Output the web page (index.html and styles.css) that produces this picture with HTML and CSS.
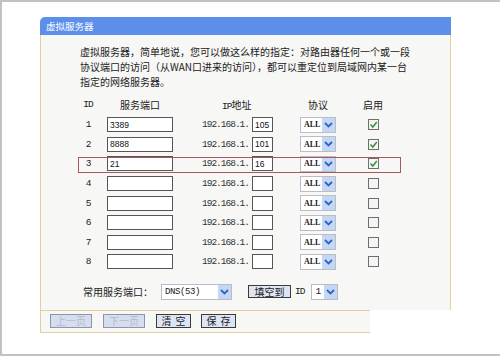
FILE: index.html
```html
<html>

<head>
	<meta charset="utf-8">
	<link rel="stylesheet" href="styles.css">
</head>

<body>
	<div id="div_frame">
		<div id="div_panel">
			<div class="title">虚拟服务器</div>
			<div class="panel_body">
				<p class="intro">虚拟服务器，简单地说，您可以做这么样的指定：对路由器任何一个或一段<br>协议端口的访问（从WAN口进来的访问），都可以重定位到局域网内某一台<br>指定的网络服务器。</p>

				<div class="grid head">
					<div class="c_id mono">ID</div>
					<div class="c_port">服务端口</div>
					<div class="c_ip"><span class="h_ip"><span class="mono">IP</span>地址</span></div>
					<div class="c_proto"><span class="h_proto">协议</span></div>
					<div class="c_on"><span class="h_on">启用</span></div>
				</div>

				<div id="div_rows">
					<div class="grid row">
						<div class="c_id mono">1</div>
						<div class="c_port"><input class="txt_port" type="text" value="3389"></div>
						<div class="c_ip"><span class="ip_pre mono">192.168.1.</span><input class="txt_ip" type="text" value="105"></div>
						<div class="c_proto"><span class="sel sel_proto">ALL<span class="arrow"><svg width="13" height="14" viewBox="0 0 13 14"><polyline points="3,5 6.5,8.5 10,5" fill="none" stroke="#2e64c8" stroke-width="1.8"/></svg></span></span></div>
						<div class="c_on"><span class="chk"><svg width="9" height="9" viewBox="0 0 9 9"><polyline points="1.5,4.5 3.8,7 7.8,2" fill="none" stroke="#3b8f3b" stroke-width="1.5"/></svg></span></div>
					</div>
					<div class="grid row">
						<div class="c_id mono">2</div>
						<div class="c_port"><input class="txt_port" type="text" value="8888"></div>
						<div class="c_ip"><span class="ip_pre mono">192.168.1.</span><input class="txt_ip" type="text" value="101"></div>
						<div class="c_proto"><span class="sel sel_proto">ALL<span class="arrow"><svg width="13" height="14" viewBox="0 0 13 14"><polyline points="3,5 6.5,8.5 10,5" fill="none" stroke="#2e64c8" stroke-width="1.8"/></svg></span></span></div>
						<div class="c_on"><span class="chk"><svg width="9" height="9" viewBox="0 0 9 9"><polyline points="1.5,4.5 3.8,7 7.8,2" fill="none" stroke="#3b8f3b" stroke-width="1.5"/></svg></span></div>
					</div>
					<div class="grid row">
						<div class="c_id mono">3</div>
						<div class="c_port"><input class="txt_port" type="text" value="21"></div>
						<div class="c_ip"><span class="ip_pre mono">192.168.1.</span><input class="txt_ip" type="text" value="16"></div>
						<div class="c_proto"><span class="sel sel_proto">ALL<span class="arrow"><svg width="13" height="14" viewBox="0 0 13 14"><polyline points="3,5 6.5,8.5 10,5" fill="none" stroke="#2e64c8" stroke-width="1.8"/></svg></span></span></div>
						<div class="c_on"><span class="chk"><svg width="9" height="9" viewBox="0 0 9 9"><polyline points="1.5,4.5 3.8,7 7.8,2" fill="none" stroke="#3b8f3b" stroke-width="1.5"/></svg></span></div>
					</div>
					<div class="grid row">
						<div class="c_id mono">4</div>
						<div class="c_port"><input class="txt_port" type="text"></div>
						<div class="c_ip"><span class="ip_pre mono">192.168.1.</span><input class="txt_ip" type="text"></div>
						<div class="c_proto"><span class="sel sel_proto">ALL<span class="arrow"><svg width="13" height="14" viewBox="0 0 13 14"><polyline points="3,5 6.5,8.5 10,5" fill="none" stroke="#2e64c8" stroke-width="1.8"/></svg></span></span></div>
						<div class="c_on"><span class="chk"></span></div>
					</div>
					<div class="grid row">
						<div class="c_id mono">5</div>
						<div class="c_port"><input class="txt_port" type="text"></div>
						<div class="c_ip"><span class="ip_pre mono">192.168.1.</span><input class="txt_ip" type="text"></div>
						<div class="c_proto"><span class="sel sel_proto">ALL<span class="arrow"><svg width="13" height="14" viewBox="0 0 13 14"><polyline points="3,5 6.5,8.5 10,5" fill="none" stroke="#2e64c8" stroke-width="1.8"/></svg></span></span></div>
						<div class="c_on"><span class="chk"></span></div>
					</div>
					<div class="grid row">
						<div class="c_id mono">6</div>
						<div class="c_port"><input class="txt_port" type="text"></div>
						<div class="c_ip"><span class="ip_pre mono">192.168.1.</span><input class="txt_ip" type="text"></div>
						<div class="c_proto"><span class="sel sel_proto">ALL<span class="arrow"><svg width="13" height="14" viewBox="0 0 13 14"><polyline points="3,5 6.5,8.5 10,5" fill="none" stroke="#2e64c8" stroke-width="1.8"/></svg></span></span></div>
						<div class="c_on"><span class="chk"></span></div>
					</div>
					<div class="grid row">
						<div class="c_id mono">7</div>
						<div class="c_port"><input class="txt_port" type="text"></div>
						<div class="c_ip"><span class="ip_pre mono">192.168.1.</span><input class="txt_ip" type="text"></div>
						<div class="c_proto"><span class="sel sel_proto">ALL<span class="arrow"><svg width="13" height="14" viewBox="0 0 13 14"><polyline points="3,5 6.5,8.5 10,5" fill="none" stroke="#2e64c8" stroke-width="1.8"/></svg></span></span></div>
						<div class="c_on"><span class="chk"></span></div>
					</div>
					<div class="grid row">
						<div class="c_id mono">8</div>
						<div class="c_port"><input class="txt_port" type="text"></div>
						<div class="c_ip"><span class="ip_pre mono">192.168.1.</span><input class="txt_ip" type="text"></div>
						<div class="c_proto"><span class="sel sel_proto">ALL<span class="arrow"><svg width="13" height="14" viewBox="0 0 13 14"><polyline points="3,5 6.5,8.5 10,5" fill="none" stroke="#2e64c8" stroke-width="1.8"/></svg></span></span></div>
						<div class="c_on"><span class="chk"></span></div>
					</div>
					<!-- red box drawn over row 3 -->
					<div class="mark"></div>
				</div>

				<div class="common">
					<span>常用服务端口：</span>
					<span class="sel sel_dns">DNS(53)<span class="arrow"><svg width="13" height="14" viewBox="0 0 13 14"><polyline points="3,5 6.5,8.5 10,5" fill="none" stroke="#2e64c8" stroke-width="1.8"/></svg></span></span>
					<span class="btn btn_fill">填空到</span>
					<span class="lbl_id mono">ID</span>
					<span class="sel sel_id">1<span class="arrow"><svg width="13" height="14" viewBox="0 0 13 14"><polyline points="3,5 6.5,8.5 10,5" fill="none" stroke="#2e64c8" stroke-width="1.8"/></svg></span></span>
				</div>
			</div>

			<div class="footer">
				<span class="btn btn_page off">上一页</span>
				<span class="btn btn_page off">下一页</span>
				<span class="btn btn_act">清空</span>
				<span class="btn btn_act">保存</span>
			</div>
		</div>
	</div>
</body>

</html>
```

FILE: styles.css
```css
html,
body {
	margin: 0;
	padding: 0;
	background: #fff;
}

#div_frame {
	width: 500px;
	height: 356px;
	box-sizing: border-box;
	border-top: 2px solid #c2c2c2;
	border-left: 2px solid #c2c2c2;
	border-bottom: 2px solid #c2c2c2;
	padding-top: 15px;
	padding-left: 38px;
	font-family: "Noto Sans CJK SC", sans-serif;
	font-size: 10px;
	color: #222;
}

#div_panel {
	width: 411px;
}

.title {
	height: 18px;
	line-height: 18px;
	background: #5c8fea;
	border-top-left-radius: 5px;
	color: #fff;
	font-size: 9.5px;
	padding-left: 6px;
}

.panel_body {
	background: #f7f7f5;
	border-left: 1px solid #e3cf9c;
	border-right: 1px solid #e3cf9c;
	padding: 9px 0 8px 39px;
}

.intro {
	margin: 0 0 4px 0;
	line-height: 15px;
	white-space: nowrap;
}

.mono {
	font-family: "Liberation Mono", monospace;
	font-size: 9.5px;
	letter-spacing: -1px;
}

/* table columns */
.grid {
	display: grid;
	grid-template-columns: 27px 66px 117px 56px 54px;
}

.grid > div {
	display: flex;
	align-items: center;
}

.head {
	height: 22px;
}

.row {
	height: 19.6px;
}

.c_id {
	justify-content: center;
	padding-right: 11px;
}

.c_port {
	justify-content: center;
}

.c_ip {
	padding-left: 29px;
}

.h_ip {
	margin-left: 20px;
}

.h_proto {
	margin-left: 10px;
	width: 36px;
	text-align: center;
}

.h_on {
	margin-left: 17px;
}

#div_rows {
	position: relative;
}

.mark {
	position: absolute;
	left: -2px;
	top: 42px;
	width: 323px;
	height: 16px;
	box-sizing: border-box;
	border: 1px solid #a8585c;
}

input {
	box-sizing: border-box;
	height: 15px;
	border: 1px solid #555;
	background: #fff;
	padding: 0 0 0 2px;
	margin: 0;
	font-family: "Liberation Sans", sans-serif;
	font-size: 8.5px;
	color: #111;
}

.txt_port {
	width: 66px;
}

.txt_ip {
	width: 21px;
	margin-left: 3px;
}

.ip_pre {
	color: #333;
}

/* fake drop down lists */
.sel {
	position: relative;
	display: inline-flex;
	align-items: center;
	box-sizing: border-box;
	height: 16px;
	border: 1px solid #b9bec6;
	background: #fff;
	padding-left: 3px;
	font-family: "Liberation Serif", serif;
	font-size: 8px;
	font-weight: bold;
	color: #222;
}

.sel .arrow {
	position: absolute;
	right: 0;
	top: 0;
	width: 13px;
	height: 14px;
	background: #c6d7f4;
}

.arrow svg {
	display: block;
}

.sel_proto {
	margin-left: 10px;
	width: 36px;
}

.sel_dns {
	margin-left: 8px;
	width: 71px;
	font-family: "Liberation Mono", monospace;
	font-size: 9px;
	letter-spacing: -0.4px;
	font-weight: normal;
}

.sel_id {
	margin-left: 7px;
	width: 27px;
	font-family: "Liberation Mono", monospace;
	font-size: 9.5px;
	font-weight: normal;
}

.chk {
	margin-left: 22px;
	width: 11px;
	height: 11px;
	box-sizing: border-box;
	border: 1px solid #6e6e6e;
	background: #f4f4f4;
	display: flex;
	align-items: center;
	justify-content: center;
}

.common {
	display: flex;
	align-items: center;
	height: 20px;
	margin-top: 10px;
	padding-left: 3px;
}

.lbl_id {
	margin-left: 4px;
}

/* buttons */
.btn {
	display: inline-flex;
	align-items: center;
	justify-content: center;
	box-sizing: border-box;
	height: 14px;
	border: 1px solid #3a3a3a;
	background: #dde4f4;
	font-size: 10px;
	color: #222;
}

.btn_fill {
	margin-left: 16px;
	width: 43px;
	height: 13px;
}

.footer {
	display: flex;
	width: 330px;
	background: #f7f7f5;
	border-left: 1px solid #e3cf9c;
	border-top: 1px solid #e3cf9c;
	border-bottom: 1px solid #e3cf9c;
	padding: 3px 0 4px 9px;
	box-sizing: border-box;
}

.btn_page {
	width: 42px;
	margin-right: 11px;
}

.btn_act {
	width: 35px;
	margin-right: 10px;
	letter-spacing: 4px;
	text-indent: 4px;
}

.off {
	border-color: #8d95aa;
	background: #d6ddef;
	color: #b3bacb;
}
```
